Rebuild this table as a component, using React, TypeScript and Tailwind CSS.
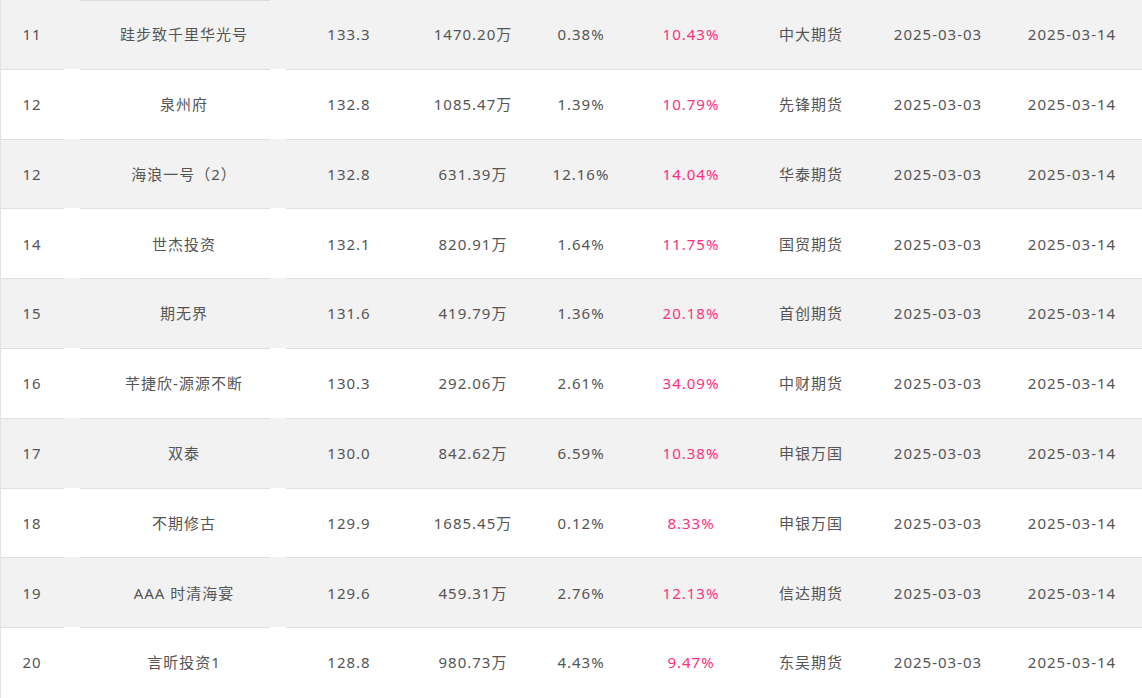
import React from 'react';

const rows = [
  ['11', '跬步致千里华光号', '133.3', '1470.20万', '0.38%', '10.43%', '中大期货'],
  ['12', '泉州府', '132.8', '1085.47万', '1.39%', '10.79%', '先锋期货'],
  ['12', '海浪一号（2）', '132.8', '631.39万', '12.16%', '14.04%', '华泰期货'],
  ['14', '世杰投资', '132.1', '820.91万', '1.64%', '11.75%', '国贸期货'],
  ['15', '期无界', '131.6', '419.79万', '1.36%', '20.18%', '首创期货'],
  ['16', '芊捷欣-源源不断', '130.3', '292.06万', '2.61%', '34.09%', '中财期货'],
  ['17', '双泰', '130.0', '842.62万', '6.59%', '10.38%', '申银万国'],
  ['18', '不期修古', '129.9', '1685.45万', '0.12%', '8.33%', '申银万国'],
  ['19', 'AAA 时清海宴', '129.6', '459.31万', '2.76%', '12.13%', '信达期货'],
  ['20', '言昕投资1', '128.8', '980.73万', '4.43%', '9.47%', '东吴期货'],
];

function Divider({ first }: { first: boolean }) {
  return (
    <div className="flex h-px w-full">
      <div className={`w-[63px] ${first ? '' : 'bg-[#dfdfdf]'}`} />
      <div className="w-[16px]" />
      <div className="w-[190px] bg-[#dfdfdf]" />
      <div className="w-[16px]" />
      <div className={`flex-1 ${first ? '' : 'bg-[#dfdfdf]'}`} />
    </div>
  );
}

export default function App() {
  return (
    <div
      className="w-[1142px] h-[698px] overflow-hidden bg-white border-l border-[#e3e3e3] text-[15px] tracking-[1px] text-[#555]"
      style={{ fontFamily: '"Noto Sans", "Noto Sans CJK SC", sans-serif' }}
    >
      {rows.map((r, i) => (
        <div
          key={i}
          className={`flex flex-col ${i === 0 ? 'h-[68.8px]' : 'h-[69.8px]'} ${i % 2 === 0 ? 'bg-[#f2f2f2]' : 'bg-white'}`}
        >
          <Divider first={i === 0} />
          <div className={`flex flex-1 items-center ${i === 0 ? 'pb-[1px]' : 'pb-0'}`}>
            <div className="w-[62px] text-center">{r[0]}</div>
            <div className="w-[210px] ml-[16px] text-center">{r[1]}</div>
            <div className="w-[120px] text-center">{r[2]}</div>
            <div className="w-[128px] text-center">{r[3]}</div>
            <div className="w-[88px] text-center">{r[4]}</div>
            <div className="w-[132px] text-center text-[#ff2f7d]">{r[5]}</div>
            <div className="w-[108px] text-center">{r[6]}</div>
            <div className="w-[146px] text-center">2025-03-03</div>
            <div className="w-[122px] text-center">2025-03-14</div>
          </div>
        </div>
      ))}
    </div>
  );
}
